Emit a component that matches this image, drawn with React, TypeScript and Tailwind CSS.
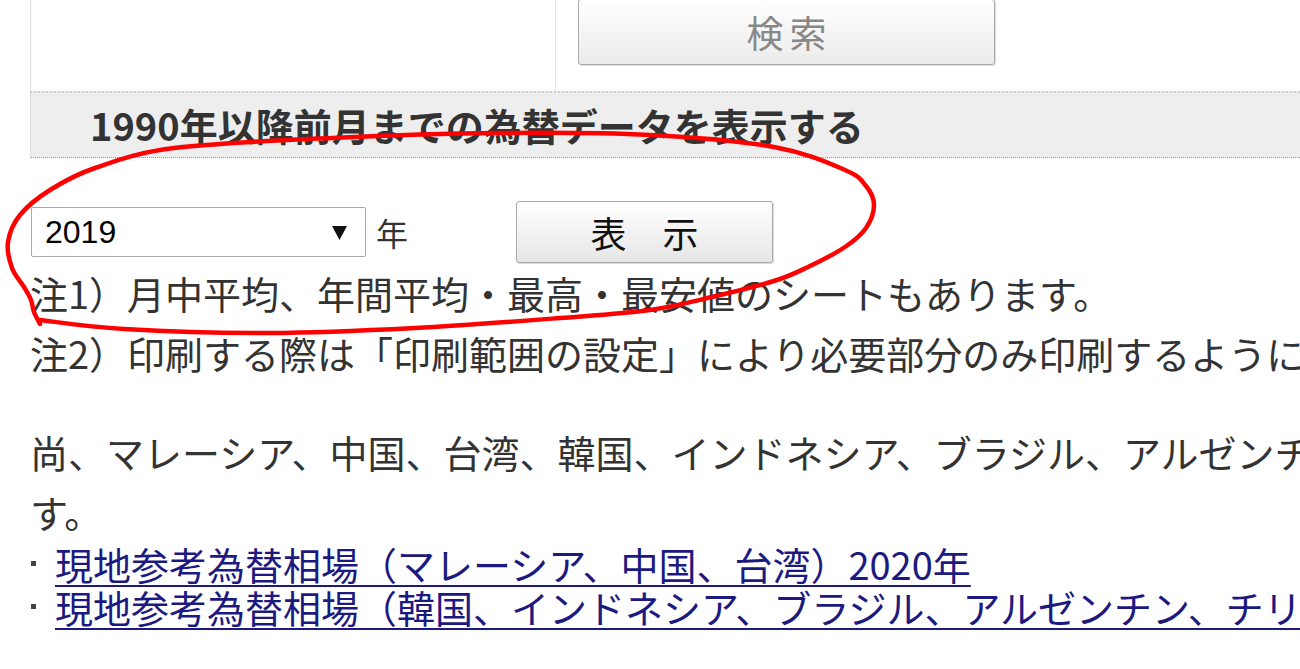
import React from "react";

const jp = "font-['Meiryo','Noto_Sans_CJK_JP',sans-serif]";

// hand drawn red loop, points traced off the screenshot
const loop: [number, number][] = [
  [40, 320], [124, 329], [270, 333], [415, 328], [560, 318], [650, 310],
  [712, 297], [774, 281], [808, 267], [845, 247], [866, 228], [874, 205],
  [866, 186], [845, 170], [774, 147], [650, 135], [498, 133], [332, 138],
  [174, 148], [95, 168], [50, 190], [20, 215], [8, 242], [12, 268],
  [24, 287], [31, 300], [34, 312], [40, 324],
];

function smoothPath(pts: [number, number][]) {
  let d = `M ${pts[0][0]} ${pts[0][1]}`;
  for (let i = 0; i < pts.length - 1; i++) {
    const p0 = pts[i - 1] ?? pts[i];
    const p1 = pts[i];
    const p2 = pts[i + 1];
    const p3 = pts[i + 2] ?? p2;
    const c1x = p1[0] + (p2[0] - p0[0]) / 6;
    const c1y = p1[1] + (p2[1] - p0[1]) / 6;
    const c2x = p2[0] - (p3[0] - p1[0]) / 6;
    const c2y = p2[1] - (p3[1] - p1[1]) / 6;
    d += ` C ${c1x} ${c1y} ${c2x} ${c2y} ${p2[0]} ${p2[1]}`;
  }
  return d;
}

export default function App() {
  return (
    <div className={`relative w-[1300px] h-[669px] overflow-hidden bg-white text-[#333] ${jp}`}>
      {/* search table */}
      <div className="flex ml-[30px] h-[91px] border-l border-[#ddd]">
        <div className="w-[525px] border-r border-[#e3e3e3]" />
        <div className="flex-1 pl-[22px]">
          <button className="-mt-px w-[417px] h-[66px] rounded-[3px] border border-[#aaa] bg-gradient-to-b from-white to-[#ebebeb] shadow-[1px_1px_1px_rgba(0,0,0,0.15)] text-[37px] tracking-[6px] pl-[6px] text-[#888] leading-none">
            検索
          </button>
        </div>
      </div>

      {/* heading */}
      <div className="ml-[30px] h-[67px] border-t-2 border-l border-t-[#ccc] border-l-[#ccc] border-b border-b-[#999] border-dotted bg-[#eee] flex items-center pl-[59px]">
        <h2 className="text-[38px] font-bold text-[#333] leading-none whitespace-nowrap">
          1990年以降前月までの為替データを表示する
        </h2>
      </div>

      {/* year picker */}
      <div className="flex items-center h-[62px] mt-[43px] ml-[31px]">
        <div className="relative w-[335px] h-[50px] rounded-[2px] border border-[#a9a9a9] bg-white">
          <select className="appearance-none w-full h-full bg-transparent pl-[13px] font-['Liberation_Sans',Arial,sans-serif] text-[32px] text-black outline-none">
            <option>2019</option>
          </select>
          <svg className="absolute right-[18px] top-[17px] pointer-events-none" width="15" height="15" viewBox="0 0 15 15">
            <polygon points="0,1 15,1 7.5,15" fill="#111" />
          </svg>
        </div>
        <span className="ml-[10px] text-[32px] leading-none text-[#333]">年</span>
        <button className="ml-[108px] w-[257px] h-[62px] rounded-[3px] border border-[#aaa] bg-gradient-to-b from-white to-[#e6e6e6] shadow-[1px_1px_1px_rgba(0,0,0,0.15)] text-[36px] leading-none text-[#111]">
          表　示
        </button>
      </div>

      {/* notes */}
      <div className="ml-[30px] text-[38px] leading-[60px] whitespace-nowrap">
        <p>注1）月中平均、年間平均・最高・最安値のシートもあります。</p>
        <p>注2）印刷する際は「印刷範囲の設定」により必要部分のみ印刷するようにしてください。</p>
        <p className="mt-[39px]">
          尚、マレーシア、中国、台湾、韓国、インドネシア、ブラジル、アルゼンチン、チリの現地参考為替相場も公表していま
          <br />
          す。
        </p>
        <ul className="leading-[43px]">
          <LinkItem label="現地参考為替相場（マレーシア、中国、台湾）2020年" />
          <LinkItem label="現地参考為替相場（韓国、インドネシア、ブラジル、アルゼンチン、チリ）2020年" />
        </ul>
      </div>

      <svg className="absolute inset-0 pointer-events-none" width="1300" height="669" viewBox="0 0 1300 669">
        <path d={smoothPath(loop)} fill="none" stroke="#f00" strokeWidth="4.5" strokeLinecap="round" strokeLinejoin="round" />
      </svg>
    </div>
  );
}

function LinkItem({ label }: { label: string }) {
  return (
    <li className="flex items-center whitespace-nowrap">
      <span className="shrink-0 w-[5px] h-[5px] bg-[#444] mr-[19px] ml-[1px]" />
      <a href="#" className="shrink-0 text-[#1c1a80] underline decoration-2 underline-offset-[5px]">
        {label}
      </a>
    </li>
  );
}
